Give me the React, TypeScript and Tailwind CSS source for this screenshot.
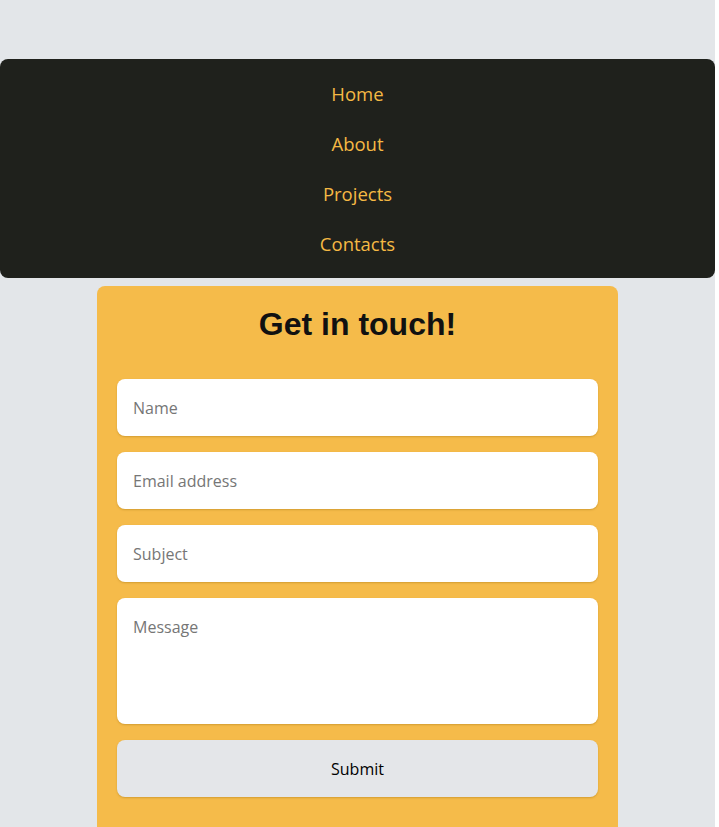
import React from 'react';

const links = ['Home', 'About', 'Projects', 'Contacts'];

const fieldClass =
  "w-full h-[57px] rounded-lg bg-white px-4 text-[16px] text-black placeholder:text-[#767676] shadow-[0_1px_2px_rgba(150,100,0,0.35)] outline-none";

export default function App() {
  return (
    <div className="w-[715px] min-h-screen bg-[#e3e6e9] pt-[59px] font-['Open_Sans',sans-serif]">
      {/* Nav */}
      <nav className="rounded-lg bg-[#1f211c] pt-[10px] pb-[9px]">
        <ul className="flex flex-col items-center">
          {links.map((l) => (
            <li key={l} className="h-[50px] flex items-center">
              <a href="#" className="text-[18.5px] text-[#f5b944]">{l}</a>
            </li>
          ))}
        </ul>
      </nav>

      {/* Contact card */}
      <div className="mx-auto mt-2 w-[521px] rounded-lg bg-[#f5bb4a] px-5 pt-4 pb-10">
        <h1 className="text-center text-[32px] leading-[44px] font-bold text-[#111] font-['Liberation_Sans',Arial,sans-serif]">
          Get in touch!
        </h1>
        <form className="mt-[33px] flex flex-col gap-4" onSubmit={(e) => e.preventDefault()}>
          <input type="text" placeholder="Name" className={fieldClass} />
          <input type="email" placeholder="Email address" className={fieldClass} />
          <input type="text" placeholder="Subject" className={fieldClass} />
          <textarea
            placeholder="Message"
            className="w-full h-[126px] resize-none rounded-lg bg-white px-4 py-[17px] text-[16px] leading-6 text-black placeholder:text-[#767676] shadow-[0_1px_2px_rgba(150,100,0,0.35)] outline-none"
          />
          <button
            type="submit"
            className="w-full h-[57px] rounded-lg bg-[#e4e6e9] text-[16px] text-black shadow-[0_1px_2px_rgba(150,100,0,0.35)]"
          >
            Submit
          </button>
        </form>
      </div>
    </div>
  );
}
